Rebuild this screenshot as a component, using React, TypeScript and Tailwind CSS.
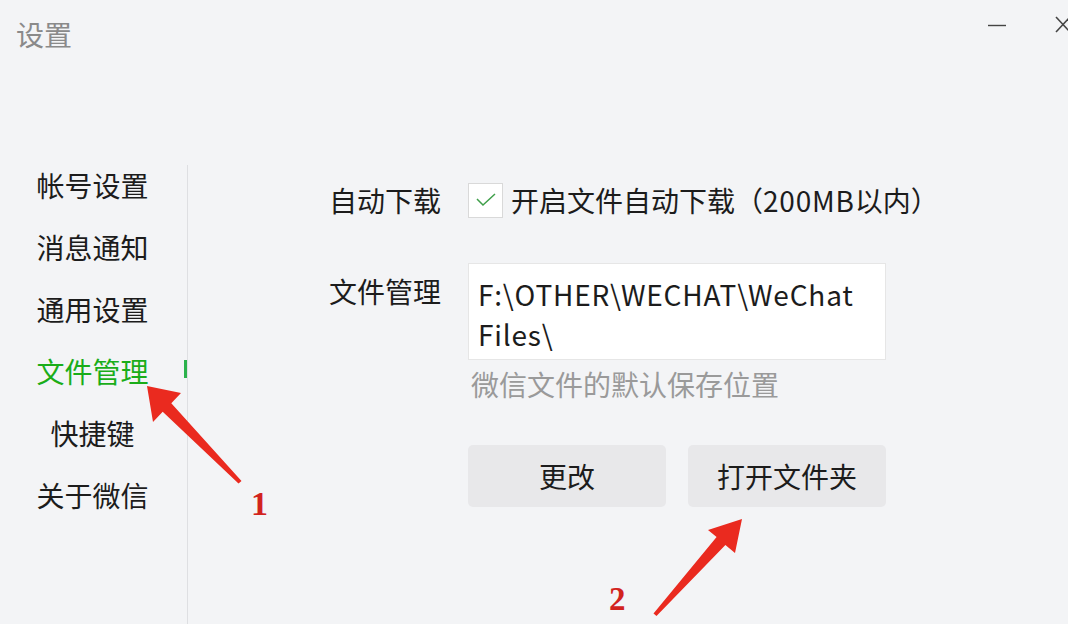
import React from "react";

const font = { fontFamily: '"Noto Sans CJK SC", "Noto Sans", sans-serif' };

export default function App() {
  const items = ["帐号设置", "消息通知", "通用设置", "文件管理", "快捷键", "关于微信"];
  return (
    <div
      className="relative w-[1068px] h-[624px] overflow-hidden bg-[#f3f4f6] text-[#1c1c1c] flex flex-col"
      style={font}
    >
      {/* title bar */}
      <div className="flex items-start h-[154px] shrink-0">
        <div className="pl-[16px] pt-[14px] text-[28px] leading-[40px] text-[#8a8a8a]">设置</div>
        <div className="ml-auto flex items-start gap-[48px] pt-[16px] pr-0">
          <svg width="20" height="20" viewBox="0 0 20 20">
            <line x1="1" y1="9.5" x2="19" y2="9.5" stroke="#444" strokeWidth="1.4" />
          </svg>
          <svg width="16" height="18" viewBox="0 0 16 18" className="mr-[-3px]">
            <line x1="1" y1="1" x2="15" y2="16" stroke="#444" strokeWidth="1.6" />
            <line x1="15" y1="1" x2="1" y2="16" stroke="#444" strokeWidth="1.6" />
          </svg>
        </div>
      </div>

      {/* body */}
      <div className="flex flex-1">
        {/* sidebar */}
        <div className="w-[187px] shrink-0 flex flex-col">
          {items.map((t) => {
            const active = t === "文件管理";
            return (
              <div
                key={t}
                className={`relative h-[62px] flex items-center justify-center pr-[2px] text-[28px] ${
                  active ? "text-[#1aad19]" : "text-[#1c1c1c]"
                }`}
              >
                {t}
                {active && (
                  <div className="absolute right-0 top-[20px] w-[3px] h-[18px] bg-[#2bb24c]" />
                )}
              </div>
            );
          })}
        </div>
        <div className="w-px bg-[#dedfe2] mt-[11px] shrink-0" />

        {/* content */}
        <div className="flex flex-col pl-[141px] pt-[24px]">
          <div className="flex items-center h-[44px]">
            <div className="w-[139px] text-[28px]">自动下载</div>
            <div className="w-[35px] h-[35px] bg-white border border-[#d9d9d9] flex items-center justify-center">
              <svg width="22" height="16" viewBox="0 0 22 16">
                <polyline points="2,7 8,13 20,2" fill="none" stroke="#3f9f4a" strokeWidth="1.5" />
              </svg>
            </div>
            <div className="ml-[8px] text-[28px] whitespace-nowrap">
              开启文件自动下载（<span className="tracking-[0.8px]">200MB</span>以内）
            </div>
          </div>

          <div className="flex items-start mt-[41px]">
            <div className="w-[139px] text-[28px] leading-[56px]">文件管理</div>
            <div className="flex flex-col">
              <div className="w-[418px] h-[97px] bg-white border border-[#e6e6e6] pl-[9px] pt-[10px] text-[28px] leading-[40px] tracking-[0.8px]">
                F:\OTHER\WECHAT\WeChat
                <br />
                Files\
              </div>
              <div className="mt-[6px] pl-[3px] text-[28px] leading-[36px] text-[#9a9a9a]">
                微信文件的默认保存位置
              </div>
              <div className="flex gap-[22px] mt-[43px]">
                <div className="w-[198px] h-[62px] rounded-[5px] bg-[#e8e8ea] flex items-center justify-center text-[28px]">
                  更改
                </div>
                <div className="w-[198px] h-[62px] rounded-[5px] bg-[#e8e8ea] flex items-center justify-center text-[28px]">
                  打开文件夹
                </div>
              </div>
            </div>
          </div>
        </div>
      </div>

      {/* annotations */}
      <svg className="absolute left-0 top-0 pointer-events-none" width="1068" height="624" viewBox="0 0 1068 624">
        <polygon
          points="147,386 181,393 171.3,403.3 241.5,481 238.5,483.5 162.7,411.7 153,422"
          fill="#ea2a1f"
        />
        <polygon
          points="742,519 735,553 725.4,545 656.5,616 653.5,613.5 716.6,537 708,530"
          fill="#ea2a1f"
        />
      </svg>
      <div
        className="absolute left-[251px] top-[484px] text-[34px] leading-[40px] font-bold text-[#d2231d]"
        style={{ fontFamily: '"Liberation Serif", serif' }}
      >
        1
      </div>
      <div
        className="absolute left-[609px] top-[580px] text-[33px] leading-[38px] font-bold text-[#d2231d]"
        style={{ fontFamily: '"Liberation Serif", serif' }}
      >
        2
      </div>
    </div>
  );
}
